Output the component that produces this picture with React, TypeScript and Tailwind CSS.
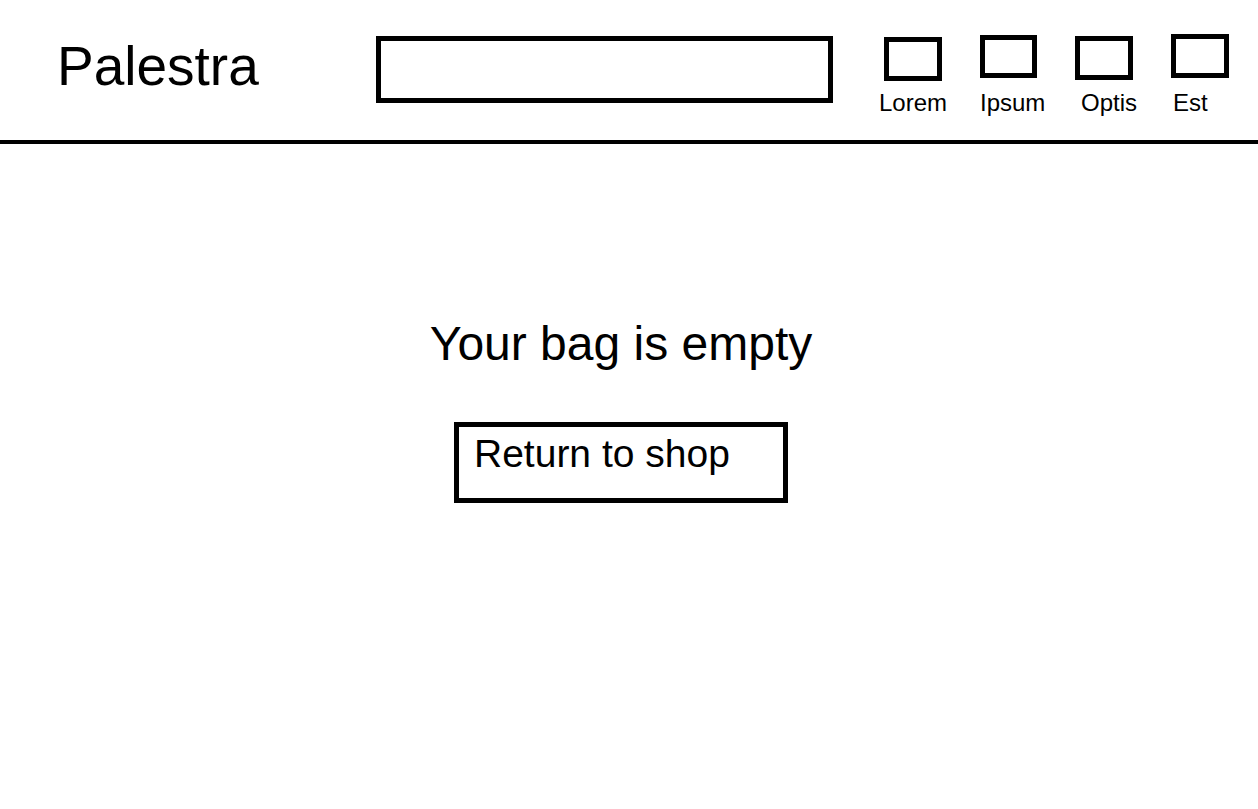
import React from "react";

export default function App() {
  const items = [
    { label: "Lorem", w: "w-[102px]", boxMl: "ml-[7px]", boxMt: "mt-[37px]", boxH: "h-[44px]", boxW: "w-[58px]", labelMl: "ml-[2px]", labelMt: "mt-[10px]" },
    { label: "Ipsum", w: "w-[96px]", boxMl: "ml-[1px]", boxMt: "mt-[35px]", boxH: "h-[43px]", boxW: "w-[57px]", labelMl: "ml-[1px]", labelMt: "mt-[13px]" },
    { label: "Optis", w: "w-[96px]", boxMl: "ml-0", boxMt: "mt-[36px]", boxH: "h-[44px]", boxW: "w-[58px]", labelMl: "ml-[6px]", labelMt: "mt-[11px]" },
    { label: "Est", w: "w-[87px]", boxMl: "ml-0", boxMt: "mt-[34px]", boxH: "h-[44px]", boxW: "w-[58px]", labelMl: "ml-[2px]", labelMt: "mt-[13px]" },
  ];
  return (
    <div className="w-[1258px] h-[809px] bg-white text-black font-['Liberation_Sans',Arial,sans-serif] overflow-hidden">
      <header className="h-[144px] border-b-4 border-black flex items-start">
        <div className="w-[376px] shrink-0 pl-[57px] pt-[39px] text-[55px] leading-[55px] whitespace-nowrap">
          Palestra
        </div>
        <div className="mt-[36px] w-[457px] h-[67px] shrink-0 border-[5px] border-black" />
        <nav className="ml-[44px] flex items-start">
          {items.map((it) => (
            <div key={it.label} className={`${it.w} shrink-0 flex flex-col items-start`}>
              <div className={`${it.boxMl} ${it.boxMt} ${it.boxH} ${it.boxW} border-[5px] border-black`} />
              <div className={`${it.labelMl} ${it.labelMt} text-[24px] leading-[24px] whitespace-nowrap`}>
                {it.label}
              </div>
            </div>
          ))}
        </nav>
      </header>
      <main className="flex flex-col items-center pr-[16px]">
        <h1 className="mt-[176px] text-[48px] leading-[48px] font-normal whitespace-nowrap">
          Your bag is empty
        </h1>
        <button className="mt-[54px] w-[334px] h-[81px] border-[5px] border-black flex items-start pl-[15px] pt-[7px] text-[39px] leading-[39px] whitespace-nowrap cursor-pointer">
          Return to shop
        </button>
      </main>
    </div>
  );
}
